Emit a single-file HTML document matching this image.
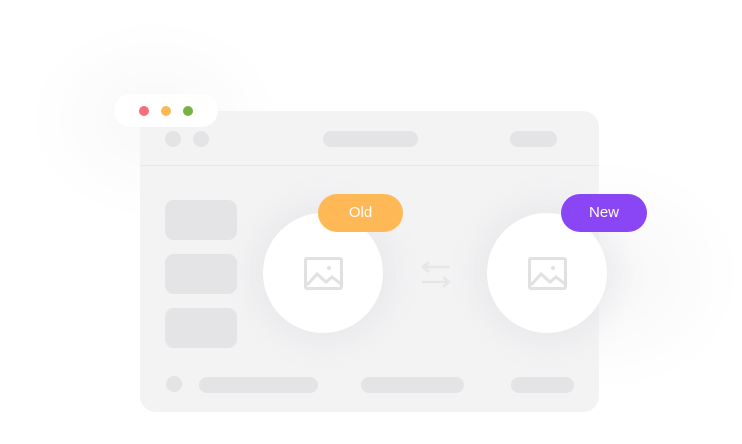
<!DOCTYPE html><html><head><style>
body{margin:0;width:742px;height:444px;background:#fff;position:relative;overflow:hidden;font-family:"Liberation Sans",sans-serif}
.a{position:absolute}
.g{background:#e4e4e6}
</style></head><body>
<div class="a" style="left:30px;top:20px;width:250px;height:200px;border-radius:50%;background:radial-gradient(closest-side,#f8f8f9,rgba(255,255,255,0));"></div>
<div class="a" style="left:480px;top:160px;width:260px;height:230px;border-radius:50%;background:radial-gradient(closest-side,#f7f7f8,rgba(255,255,255,0));"></div>
<div class="a" style="left:140px;top:111px;width:459px;height:301px;border-radius:16px;background:#f3f3f4"></div>
<div class="a" style="left:140px;top:165px;width:459px;height:1px;background:#e8e8ea"></div>
<div class="a" style="left:114px;top:94px;width:104px;height:33px;border-radius:17px;background:#fff"></div>
<div class="a" style="left:139px;top:106px;width:10px;height:10px;border-radius:50%;background:#f56f7c"></div>
<div class="a" style="left:161px;top:106px;width:10px;height:10px;border-radius:50%;background:#fdb754"></div>
<div class="a" style="left:183px;top:106px;width:10px;height:10px;border-radius:50%;background:#77b247"></div>
<div class="a g" style="left:165px;top:131px;width:16px;height:16px;border-radius:50%"></div>
<div class="a g" style="left:193px;top:131px;width:16px;height:16px;border-radius:50%"></div>
<div class="a g" style="left:323px;top:131px;width:95px;height:16px;border-radius:8px"></div>
<div class="a g" style="left:510px;top:131px;width:47px;height:16px;border-radius:8px"></div>
<div class="a g" style="left:165px;top:200px;width:72px;height:40px;border-radius:9px"></div>
<div class="a g" style="left:165px;top:254px;width:72px;height:40px;border-radius:9px"></div>
<div class="a g" style="left:165px;top:308px;width:72px;height:40px;border-radius:9px"></div>
<div class="a g" style="left:166px;top:376px;width:16px;height:16px;border-radius:50%"></div>
<div class="a g" style="left:199px;top:377px;width:119px;height:16px;border-radius:8px"></div>
<div class="a g" style="left:361px;top:377px;width:103px;height:16px;border-radius:8px"></div>
<div class="a g" style="left:511px;top:377px;width:63px;height:16px;border-radius:8px"></div>
<div class="a" style="left:263px;top:213px;width:120px;height:120px;border-radius:50%;background:#fff;box-shadow:0 0 25px 12px rgba(225,225,228,.45)"></div>
<div class="a" style="left:487px;top:213px;width:120px;height:120px;border-radius:50%;background:#fff;box-shadow:0 0 25px 12px rgba(225,225,228,.45)"></div>
<svg class="a" style="left:0;top:0" width="742" height="444">
<g fill="none" stroke="#e1e1e3" stroke-width="3">
<rect x="305.5" y="258.5" width="36" height="30" rx="1.5"/><path d="M307 285l10-11 9 8 6-5 9 7"/>
<rect x="529.5" y="258.5" width="36" height="30" rx="1.5"/><path d="M531 285l10-11 9 8 6-5 9 7"/>
<path d="M450 267h-27m6-5l-6 5 6 5M422 282h27m-6-5l6 5-6 5" stroke-width="2.5" stroke="#e6e6e8"/>
</g>
<circle cx="329" cy="268" r="2" fill="#e1e1e3"/><circle cx="553" cy="268" r="2" fill="#e1e1e3"/>
</svg>
<div class="a" style="left:318px;top:194px;width:85px;height:38px;border-radius:19px;background:#feb956;color:#fff;font-size:15px;line-height:38px;text-align:center">Old</div>
<div class="a" style="left:561px;top:194px;width:86px;height:38px;border-radius:19px;background:#8a45f4;color:#fff;font-size:15px;line-height:38px;text-align:center">New</div>
</body></html>
